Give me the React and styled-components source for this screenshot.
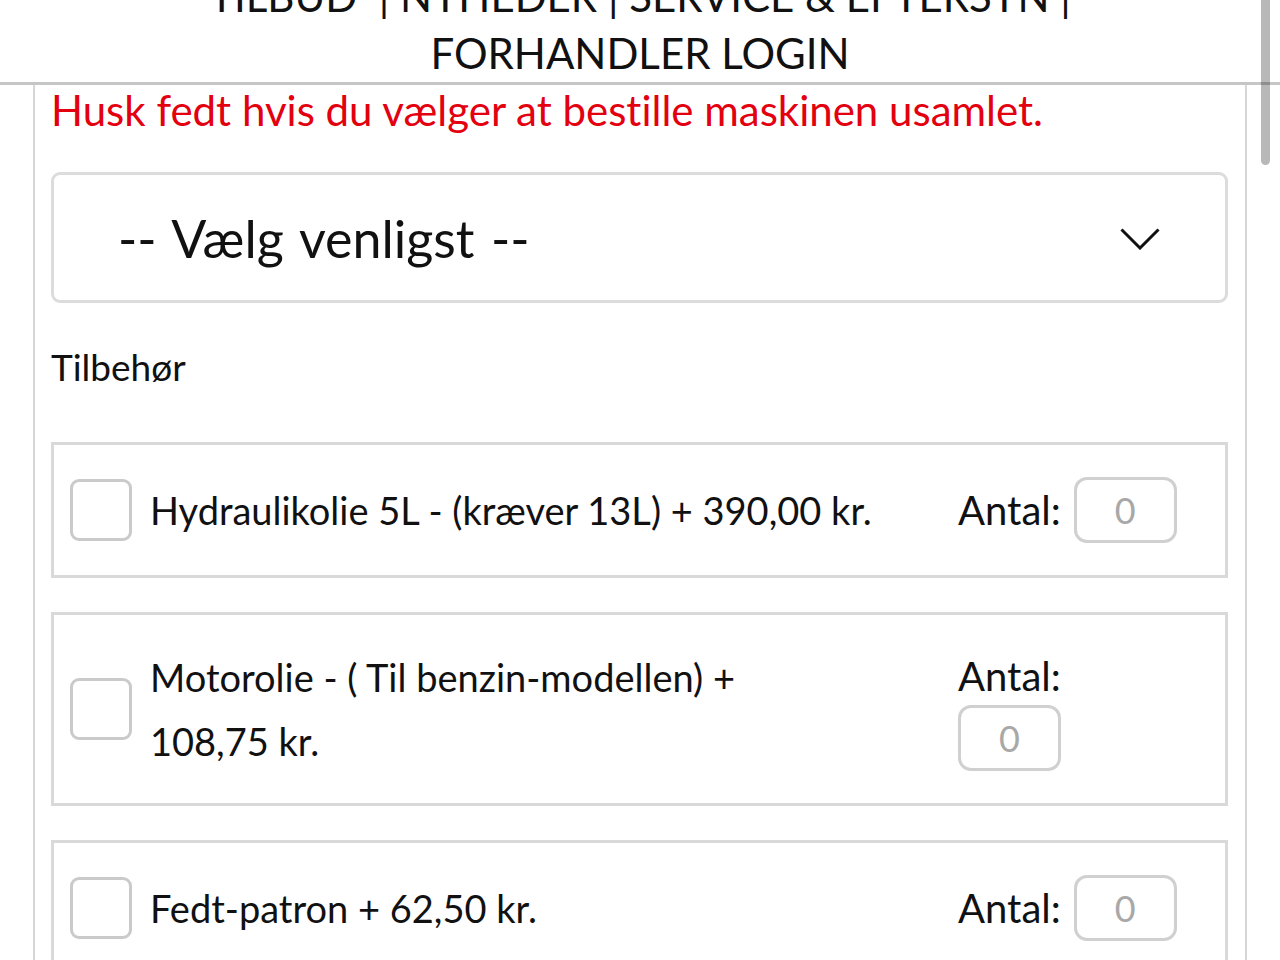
import React from "react";
import styled, { createGlobalStyle } from "styled-components";

const GlobalStyle = createGlobalStyle`
  html, body {
    margin: 0;
    padding: 0;
    background: #fff;
  }
  body {
    font-family: Lato, "Open Sans", "DejaVu Sans", sans-serif;
    font-variant-ligatures: none;
    color: #111;
  }
  * {
    box-sizing: border-box;
  }
`;

const accessories = [
  { id: "hyd", label: "Hydraulikolie 5L - (kræver 13L) + 390,00 kr." },
  { id: "motor", label: "Motorolie - ( Til benzin-modellen) + 108,75\u00a0kr.", stacked: true },
  { id: "fedt", label: "Fedt-patron + 62,50 kr." },
];

export default function App() {
  return (
    <Page>
      <GlobalStyle />
      <Header>
        <NavLine>TILBUD&nbsp; | NYHEDER | SERVICE &amp; EFTERSYN |</NavLine>
        <NavLine>FORHANDLER LOGIN</NavLine>
      </Header>
      <Panel>
        <Notice>Husk fedt hvis du vælger at bestille maskinen usamlet.</Notice>
        <SelectBox>
          <span>-- Vælg venligst --</span>
          <svg width="40" height="22" viewBox="0 0 40 22" fill="none">
            <path d="M1.5 1.5 L20 20 L38.5 1.5" stroke="#111" strokeWidth="3" />
          </svg>
        </SelectBox>
        <SectionLabel>Tilbehør</SectionLabel>
        {accessories.map((item) => (
          <Card key={item.id}>
            <Checkbox type="checkbox" />
            <ItemLabel>{item.label}</ItemLabel>
            <Quantity $stacked={item.stacked}>
              <span>Antal:</span>
              <QtyInput placeholder="0" />
            </Quantity>
          </Card>
        ))}
      </Panel>
      <ScrollThumb />
    </Page>
  );
}

const Page = styled.div`
  position: relative;
  width: 1280px;
  height: 960px;
  overflow: hidden;
`;

const Header = styled.header`
  height: 85px;
  overflow: hidden;
  display: flex;
  flex-direction: column;
  justify-content: flex-end;
  align-items: center;
  border-bottom: 3px solid #c6c6c6;
  background: #fff;
`;

const NavLine = styled.div`
  font-size: 42px;
  line-height: 57px;
  white-space: nowrap;
`;

const Panel = styled.main`
  margin: 0 33px;
  padding: 0 17px 0 16px;
  min-height: 900px;
  border-left: 2px solid #d6d6d6;
  border-right: 2px solid #d6d6d6;
`;

const Notice = styled.p`
  margin: 0;
  color: #e3000f;
  font-size: 42px;
  line-height: 50px;
`;

const SelectBox = styled.div`
  margin-top: 37px;
  height: 131px;
  display: flex;
  align-items: center;
  justify-content: space-between;
  padding: 0 65px 0 64px;
  border: 3px solid #dcdcdc;
  border-radius: 9px;
  font-size: 52px;
  word-spacing: 0.06em;
  svg {
    margin-top: 2px;
  }
`;

const SectionLabel = styled.div`
  margin: 42px 0 53px;
  font-size: 37px;
  line-height: 44px;
`;

const Card = styled.div`
  display: grid;
  grid-template-columns: 62px 790px 1fr;
  column-gap: 18px;
  align-items: center;
  min-height: 136px;
  margin-bottom: 34px;
  padding: 30px 16px;
  border: 3px solid #d9d9d9;
`;

const Checkbox = styled.input`
  appearance: none;
  margin: 0;
  width: 62px;
  height: 62px;
  border: 3px solid #cacaca;
  border-radius: 9px;
  background: #fff;
`;

const ItemLabel = styled.label`
  padding-right: 30px;
  font-size: 38px;
  line-height: 64px;
`;

const Quantity = styled.div`
  display: flex;
  flex-direction: ${(p) => (p.$stacked ? "column" : "row")};
  align-items: ${(p) => (p.$stacked ? "flex-start" : "center")};
  gap: ${(p) => (p.$stacked ? "0" : "13px")};
  font-size: 40px;
  line-height: 58px;
`;

const QtyInput = styled.input`
  width: 103px;
  height: 66px;
  border: 3px solid #d0d0d0;
  border-radius: 13px;
  font-family: inherit;
  font-size: 36px;
  text-align: center;
  outline: none;
  &::placeholder {
    color: #a8a8a8;
  }
`;

const ScrollThumb = styled.div`
  position: absolute;
  top: 0;
  right: 10px;
  width: 9px;
  height: 165px;
  border-radius: 0 0 5px 5px;
  background: rgba(0, 0, 0, 0.28);
`;
